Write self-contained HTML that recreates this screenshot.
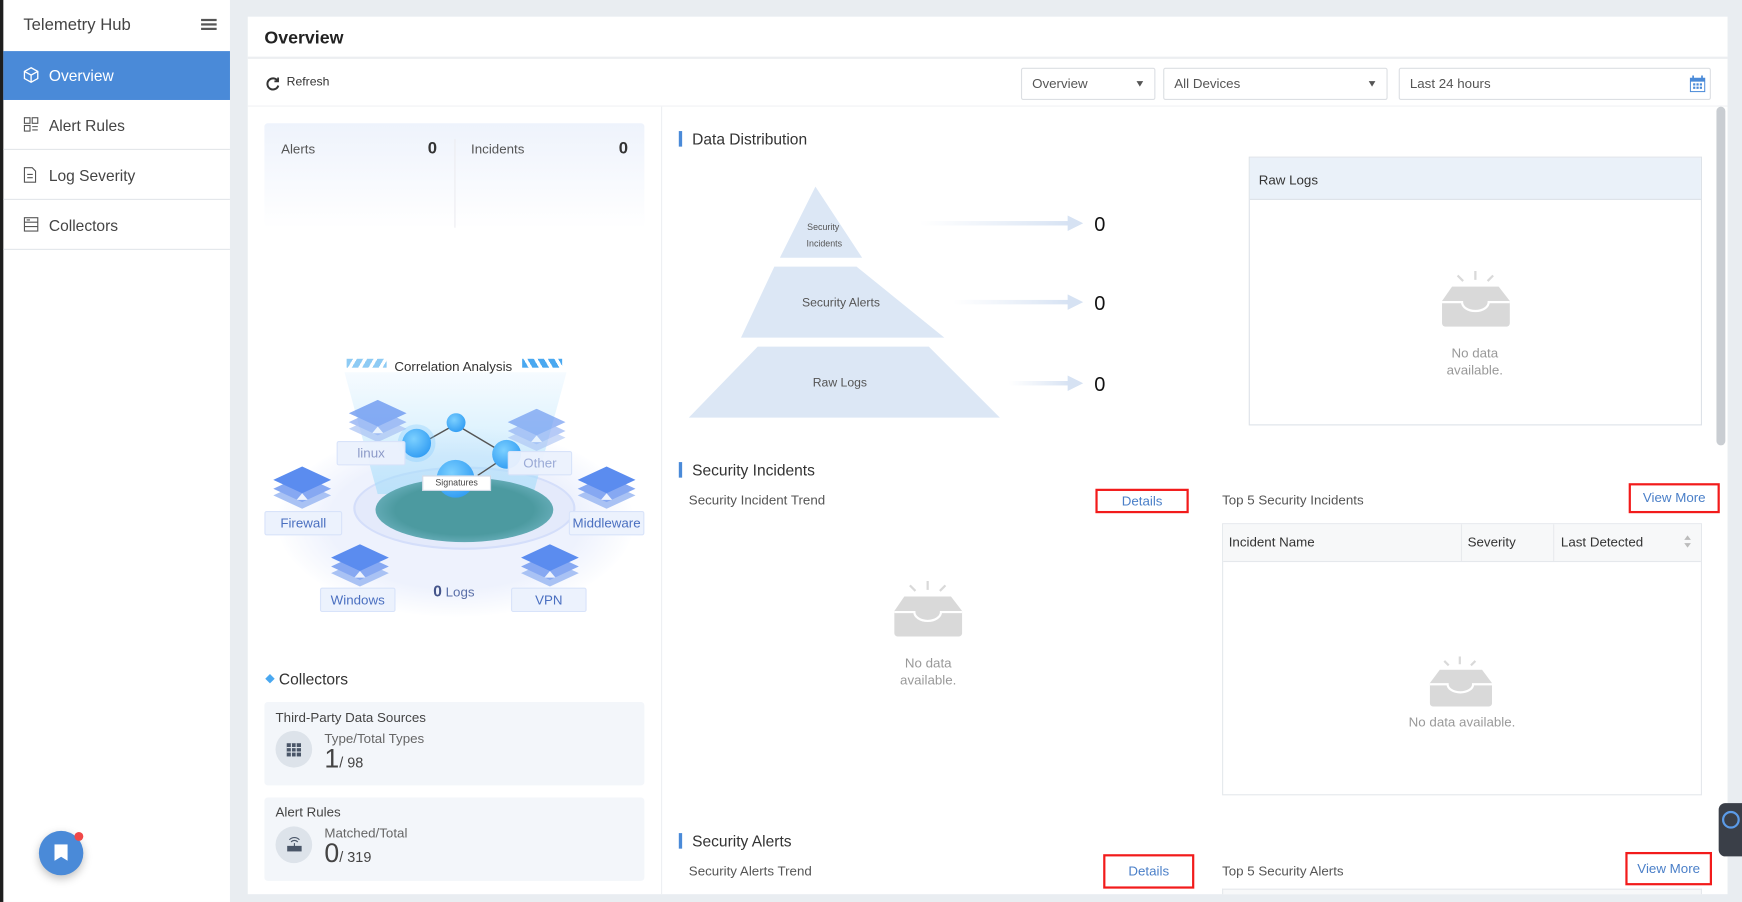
<!DOCTYPE html>
<html><head><meta charset="utf-8"><style>
*{box-sizing:border-box;margin:0;padding:0}
html,body{width:1742px;height:902px;overflow:hidden;background:#e9edf1;font-family:"Liberation Sans","DejaVu Sans",sans-serif;color:#333}
#w{position:absolute;left:0;top:0;width:1568px;height:812px;transform:scale(1.11097,1.1108);transform-origin:0 0;background:#e9edf1}
.a{position:absolute}
.side{left:0;top:0;width:207px;height:812px;background:#fff;border-left:3px solid #1e1e1e}
.nav{position:absolute;left:0;width:204px;height:44px;border-bottom:1px solid #e3e6ea;font-size:14px;color:#444;line-line:44px;line-height:44px;padding-left:41px}
.nav svg{position:absolute;left:18px;top:14px}
.card{left:223px;top:15px;width:1332px;height:790px;background:#fff}
.sel{position:absolute;top:61px;height:29px;border:1px solid #dcdfe3;border-radius:2px;font-size:12px;color:#555;line-height:27px;padding-left:9px}
.tri{position:absolute;right:10px;top:11px;border:3px solid transparent;border-top:5px solid #555;border-bottom:0}
.h{position:absolute;font-size:14px;color:#333;padding-left:9px;border-left:3px solid #4a8ad8;line-height:14px}
.sub{position:absolute;font-size:12px;color:#555}
.red{position:absolute;border:2px solid #f21b1b;font-size:12px;color:#4a7fc8;text-align:center}
.nd{position:absolute;text-align:center;font-size:12px;color:#999;line-height:15px}
.cc{position:absolute;left:238px;width:342px;height:75px;background:#f3f6fa;border-radius:3px}
.ci{position:absolute;left:10px;top:26px;width:33px;height:33px;border-radius:50%;background:#dde3ea}
.lbl{position:absolute;background:rgba(235,241,253,.95);border:1px solid #d8e3fa;color:#4a6fc0;font-size:12px;text-align:center;line-height:20px;border-radius:2px}
.dm{position:absolute;width:56px;height:40px}
</style></head><body><div id="w">

<div class="a side">
 <div class="a" style="left:18px;top:14px;font-size:15px;color:#444">Telemetry Hub</div>
 <div class="a" style="left:178px;top:17px;width:14px;height:2px;background:#555;box-shadow:0 4px 0 #555,0 8px 0 #555"></div>
 <div class="nav" style="top:46px;background:#4a8ad8;color:#fff;border:0">
  <svg width="14" height="15" viewBox="0 0 14 15" fill="none" stroke="#fff" stroke-width="1.2"><path d="M7 1L13 4.3V10.7L7 14L1 10.7V4.3Z M1 4.3L7 7.6L13 4.3 M7 7.6V14"/></svg>Overview</div>
 <div class="nav" style="top:91px"><svg width="14" height="14" viewBox="0 0 14 14" fill="none" stroke="#555"><rect x="1" y="1" width="5" height="5"/><rect x="8" y="1" width="5" height="5"/><rect x="1" y="8" width="5" height="5"/><path d="M8 9h5M8 12h5"/></svg>Alert Rules</div>
 <div class="nav" style="top:136px"><svg width="12" height="15" viewBox="0 0 12 15" fill="none" stroke="#555"><path d="M1 1h7l3 3v10H1z M3.5 7h5M3.5 10h5"/></svg>Log Severity</div>
 <div class="nav" style="top:181px"><svg width="14" height="14" viewBox="0 0 14 14" fill="none" stroke="#555"><rect x="1" y="1" width="12" height="12"/><path d="M1 5h12M1 9h12M3 3h3"/></svg>Collectors</div>
 <div class="a" style="left:32px;top:748px;width:40px;height:40px;border-radius:50%;background:#4a8ad8;box-shadow:0 3px 8px rgba(0,0,0,.25)"></div>
 <div class="a" style="left:46px;top:760px;width:12px;height:15px;background:#fff;clip-path:polygon(0 0,100% 0,100% 100%,50% 75%,0 100%)"></div>
 <div class="a" style="left:64px;top:749px;width:8px;height:8px;border-radius:50%;background:#f04848"></div>
</div>

<div class="a card">
 <div class="a" style="left:0;top:0;width:1332px;height:38px;border-bottom:2px solid #eceef1"></div>
 <div class="a" style="left:15px;top:11px;font-size:16px;font-weight:bold;color:#222">Overview</div>
 <div class="a" style="left:0;top:80px;width:1332px;height:1px;background:#f0f2f4"></div>
 <svg class="a" style="left:16px;top:53px" width="13" height="14" viewBox="0 0 13 14" fill="none" stroke="#333" stroke-width="1.8"><path d="M11 5A5 5 0 1 0 11.5 9"/><path d="M8 5.2h3.3V1.8" stroke-width="1.6"/></svg>
 <div class="a" style="left:35px;top:53px;font-size:11px;color:#333">Refresh</div>
 <div class="a" style="left:372px;top:81px;width:1px;height:709px;background:#eef0f3"></div>
 <div class="a" style="left:1322px;top:81px;width:8px;height:305px;background:#c9cdd2;border-radius:4px"></div>
</div>

<div class="sel" style="left:919px;width:121px">Overview<span class="tri"></span></div>
<div class="sel" style="left:1047px;width:202px">All Devices<span class="tri"></span></div>
<div class="sel" style="left:1259px;width:281px">Last 24 hours
 <svg class="a" style="right:4px;top:6px" width="14" height="15" viewBox="0 0 14 15"><rect x="0.5" y="2.5" width="13" height="12" fill="none" stroke="#4a8ad8"/><rect x="0.5" y="2.5" width="13" height="3" fill="#4a8ad8"/><path d="M3 0v4M11 0v4" stroke="#4a8ad8" stroke-width="1.5"/><g fill="#4a8ad8"><rect x="3" y="7" width="2" height="2"/><rect x="6" y="7" width="2" height="2"/><rect x="9" y="7" width="2" height="2"/><rect x="3" y="10" width="2" height="2"/><rect x="6" y="10" width="2" height="2"/><rect x="9" y="10" width="2" height="2"/></g></svg></div>

<!-- stats -->
<div class="a" style="left:238px;top:111px;width:342px;height:95px;background:linear-gradient(#eef3fc,#fff);border-radius:3px"></div>
<div class="a" style="left:409px;top:125px;width:1px;height:80px;background:#ececf0"></div>
<div class="a" style="left:253px;top:127px;font-size:12px;color:#555">Alerts</div>
<div class="a" style="left:385px;top:125px;font-size:15px;font-weight:bold;color:#333">0</div>
<div class="a" style="left:424px;top:127px;font-size:12px;color:#555">Incidents</div>
<div class="a" style="left:557px;top:125px;font-size:15px;font-weight:bold;color:#333">0</div>

<!-- illustration -->
<svg width="0" height="0" style="position:absolute"><defs>
<symbol id="dm" viewBox="0 0 56 40"><polygon points="28,14 54,26 28,38 2,26" fill="#a9c2f4"/><polygon points="28,8 54,20 28,32 2,20" fill="#86a8f2"/><polygon points="28,0 54,12 28,24 2,12" fill="#5b8cef"/><polygon points="28,24 33,30 23,30" fill="#eef3fd"/></symbol>
</defs></svg>
<div class="a" style="left:250px;top:385px;width:320px;height:170px;border-radius:50%;background:radial-gradient(ellipse,#eef2fd 50%,rgba(255,255,255,0) 72%)"></div>
<div class="a" style="left:318px;top:420px;width:200px;height:75px;border-radius:50%;background:#e4eafb;border:2px solid #d4defa"></div>
<div class="a" style="left:310px;top:335px;width:200px;height:110px;background:linear-gradient(rgba(210,235,255,.2),rgba(160,220,250,.6));clip-path:polygon(0 0,100% 0,85% 100%,15% 100%)"></div>
<div class="a" style="left:338px;top:430px;width:160px;height:58px;border-radius:50%;background:radial-gradient(ellipse,#4c9aa0 55%,#6fb3c0 80%,#9fd4e0)"></div>
<div class="a" style="left:312px;top:323px;width:36px;height:8px;background:repeating-linear-gradient(120deg,#8ecbf4 0 5px,transparent 5px 8px)"></div>
<div class="a" style="left:470px;top:323px;width:36px;height:8px;background:repeating-linear-gradient(60deg,#4aa8f0 0 5px,transparent 5px 8px)"></div>
<div class="a" style="left:355px;top:323px;font-size:12px;color:#333">Correlation Analysis</div>
<svg class="dm" style="left:312px;top:360px;opacity:.7"><use href="#dm"/></svg>
<svg class="dm" style="left:455px;top:368px;opacity:.6"><use href="#dm"/></svg>
<svg class="dm" style="left:244px;top:420px"><use href="#dm"/></svg>
<svg class="dm" style="left:518px;top:420px"><use href="#dm"/></svg>
<svg class="dm" style="left:296px;top:490px"><use href="#dm"/></svg>
<svg class="dm" style="left:467px;top:490px"><use href="#dm"/></svg>
<svg class="a" style="left:360px;top:370px" width="110" height="80"><path d="M50 12L97 40M50 12L18 30M97 40L70 58" stroke="#555" stroke-width="1.3"/></svg>
<div class="a" style="left:362px;top:386px;width:26px;height:26px;border-radius:50%;background:radial-gradient(circle at 40% 35%,#7cd0ff,#1c8ef0);box-shadow:0 0 0 4px rgba(120,200,255,.3)"></div>
<div class="a" style="left:402px;top:372px;width:17px;height:17px;border-radius:50%;background:radial-gradient(circle at 40% 35%,#7cd0ff,#1c8ef0)"></div>
<div class="a" style="left:443px;top:396px;width:26px;height:26px;border-radius:50%;background:radial-gradient(circle at 40% 35%,#7cd0ff,#1c8ef0)"></div>
<div class="a" style="left:393px;top:414px;width:34px;height:34px;border-radius:50%;background:radial-gradient(circle at 40% 35%,#7cd0ff,#1c8ef0)"></div>
<div class="a" style="left:380px;top:428px;width:62px;height:14px;background:#fff;border:1px solid #cfd8e6;font-size:8px;text-align:center;line-height:12px;color:#444">Signatures</div>
<div class="lbl" style="left:303px;top:397px;width:62px;color:#8c9ac8">linux</div>
<div class="lbl" style="left:457px;top:406px;width:58px;color:#9aaad6">Other</div>
<div class="lbl" style="left:238px;top:460px;width:70px">Firewall</div>
<div class="lbl" style="left:512px;top:460px;width:68px">Middleware</div>
<div class="lbl" style="left:288px;top:529px;width:68px">Windows</div>
<div class="lbl" style="left:460px;top:529px;width:68px">VPN</div>
<div class="a" style="left:390px;top:524px;font-size:12px;color:#5a6fa8"><b style="font-size:14px;color:#44548a">0</b> Logs</div>

<!-- collectors -->
<div class="a" style="left:240px;top:608px;width:6px;height:6px;background:#4aa8f0;transform:rotate(45deg)"></div>
<div class="a" style="left:251px;top:603px;font-size:14px;color:#333">Collectors</div>
<div class="cc" style="top:632px">
 <div class="a" style="left:10px;top:7px;font-size:12px;color:#444">Third-Party Data Sources</div>
 <div class="ci"><svg class="a" style="left:10px;top:11px" width="13" height="12"><rect width="13" height="12" fill="#4a5668"/><path d="M0 4h13M0 8h13M4.3 0v12M8.6 0v12" stroke="#dde3ea"/></svg></div>
 <div class="a" style="left:54px;top:26px;font-size:12px;color:#666">Type/Total Types</div>
 <div class="a" style="left:54px;top:38px;font-size:24px;color:#444">1<span style="font-size:13px">/ 98</span></div>
</div>
<div class="cc" style="top:718px">
 <div class="a" style="left:10px;top:6px;font-size:12px;color:#444">Alert Rules</div>
 <div class="ci"><svg class="a" style="left:10px;top:9px" width="14" height="14" fill="none" stroke="#4a5668"><rect x="1" y="9" width="12" height="4" fill="#4a5668"/><path d="M4 5a4 4 0 0 1 6 0M2.5 3a6 6 0 0 1 9 0M7 6v3"/></svg></div>
 <div class="a" style="left:54px;top:25px;font-size:12px;color:#666">Matched/Total</div>
 <div class="a" style="left:54px;top:37px;font-size:24px;color:#444">0<span style="font-size:13px">/ 319</span></div>
</div>

<!-- data distribution -->
<div class="h" style="left:611px;top:118px">Data Distribution</div>
<svg class="a" style="left:618px;top:166px" width="400" height="215">
 <defs><linearGradient id="g" x1="0" x2="1"><stop offset="0" stop-color="#dde7f5" stop-opacity="0"/><stop offset="1" stop-color="#d6e2f3"/></linearGradient></defs>
 <polygon points="116,2 158,66 84,66" fill="#dce7f5"/>
 <polygon points="79,74 153,74 232,138 49,138" fill="#dce7f5"/>
 <polygon points="64,146 218,146 282,210 2,210" fill="#dce7f5"/>
 <rect x="210" y="33" width="135" height="4" fill="url(#g)"/><polygon points="343,28 357,35 343,42" fill="#d6e2f3"/>
 <rect x="240" y="104" width="105" height="4" fill="url(#g)"/><polygon points="343,99 357,106 343,113" fill="#d6e2f3"/>
 <rect x="290" y="177" width="55" height="4" fill="url(#g)"/><polygon points="343,172 357,179 343,186" fill="#d6e2f3"/>
 <text x="367" y="42" font-size="18" fill="#111">0</text>
 <text x="367" y="113" font-size="18" fill="#111">0</text>
 <text x="367" y="186" font-size="18" fill="#111">0</text>
 <text x="123" y="41" font-size="8" fill="#555" text-anchor="middle">Security</text>
 <text x="124" y="56" font-size="8" fill="#555" text-anchor="middle">Incidents</text>
 <text x="139" y="110" font-size="11" fill="#555" text-anchor="middle">Security Alerts</text>
 <text x="138" y="182" font-size="11" fill="#555" text-anchor="middle">Raw Logs</text>
</svg>

<div class="a" style="left:1124px;top:141px;width:408px;height:242px;border:1px solid #dde2e8"></div>
<div class="a" style="left:1125px;top:142px;width:406px;height:38px;background:#eaf1f9;border-bottom:1px solid #dde2e8;font-size:12px;color:#333;padding:13px 0 0 8px">Raw Logs</div>

<svg class="a" style="left:1297px;top:244px" width="64" height="52" fill="#d9d9d9"><path d="M31 0v8M15 4l5 5M47 4l-5 5" stroke="#d9d9d9" stroke-width="2"/><path d="M10 14h42l10 13v20a3 3 0 0 1-3 3H4a3 3 0 0 1-3-3V27z"/><path d="M1 28h18a12 8 0 0 0 24 0h19" stroke="#fff" stroke-width="2" fill="none"/></svg>
<div class="nd" style="left:1290px;top:311px;width:75px">No data<br>available.</div>

<div class="h" style="left:611px;top:416px">Security Incidents</div>
<div class="sub" style="left:620px;top:443px">Security Incident Trend</div>
<div class="red" style="left:986px;top:440px;width:84px;height:22px;line-height:18px">Details</div>
<svg class="a" style="left:804px;top:523px" width="64" height="52" fill="#d9d9d9"><path d="M31 0v8M15 4l5 5M47 4l-5 5" stroke="#d9d9d9" stroke-width="2"/><path d="M10 14h42l10 13v20a3 3 0 0 1-3 3H4a3 3 0 0 1-3-3V27z"/><path d="M1 28h18a12 8 0 0 0 24 0h19" stroke="#fff" stroke-width="2" fill="none"/></svg>
<div class="nd" style="left:798px;top:590px;width:75px">No data<br>available.</div>

<div class="sub" style="left:1100px;top:443px">Top 5 Security Incidents</div>
<div class="red" style="left:1466px;top:435px;width:82px;height:27px;line-height:23px">View More</div>
<div class="a" style="left:1100px;top:471px;width:432px;height:245px;border:1px solid #e5e8ec"></div>
<div class="a" style="left:1101px;top:472px;width:430px;height:34px;background:#f7f8f9;border-bottom:1px solid #e5e8ec;font-size:12px;color:#333;line-height:33px">
 <span class="a" style="left:5px">Incident Name</span>
 <span class="a" style="left:214px;top:0;height:33px;border-left:1px solid #e8eaed;padding-left:5px">Severity</span>
 <span class="a" style="left:297px;top:0;height:33px;border-left:1px solid #e8eaed;padding-left:6px">Last Detected</span>
 <span class="a" style="left:415px;top:10px;border:3px solid transparent;border-bottom:4px solid #bbb;border-top:0"></span>
 <span class="a" style="left:415px;top:17px;border:3px solid transparent;border-top:4px solid #bbb;border-bottom:0"></span>
</div>
<svg class="a" style="left:1287px;top:591px" width="56" height="47" fill="#d9d9d9"><path d="M27 0v7M13 4l4 4M41 4l-4 4" stroke="#d9d9d9" stroke-width="2"/><path d="M9 12h38l9 12v18a3 3 0 0 1-3 3H3a3 3 0 0 1-3-3V24z"/><path d="M0 25h16a11 7 0 0 0 23 0h17" stroke="#fff" stroke-width="2" fill="none"/></svg>
<div class="nd" style="left:1260px;top:643px;width:112px">No data available.</div>

<div class="h" style="left:611px;top:750px">Security Alerts</div>
<div class="sub" style="left:620px;top:777px">Security Alerts Trend</div>
<div class="red" style="left:993px;top:769px;width:82px;height:31px;line-height:27px">Details</div>
<div class="sub" style="left:1100px;top:777px">Top 5 Security Alerts</div>
<div class="red" style="left:1463px;top:767px;width:78px;height:30px;line-height:26px">View More</div>
<div class="a" style="left:1100px;top:800px;width:432px;height:5px;border:1px solid #e5e8ec;border-bottom:0;background:#f7f8f9"></div>

<div class="a" style="left:1547px;top:723px;width:21px;height:48px;background:#3a3f48;border-radius:6px 0 0 6px"></div>
<div class="a" style="left:1550px;top:730px;width:16px;height:16px;border-radius:50%;border:2px solid #5b9be8"></div>
</div></body></html>
